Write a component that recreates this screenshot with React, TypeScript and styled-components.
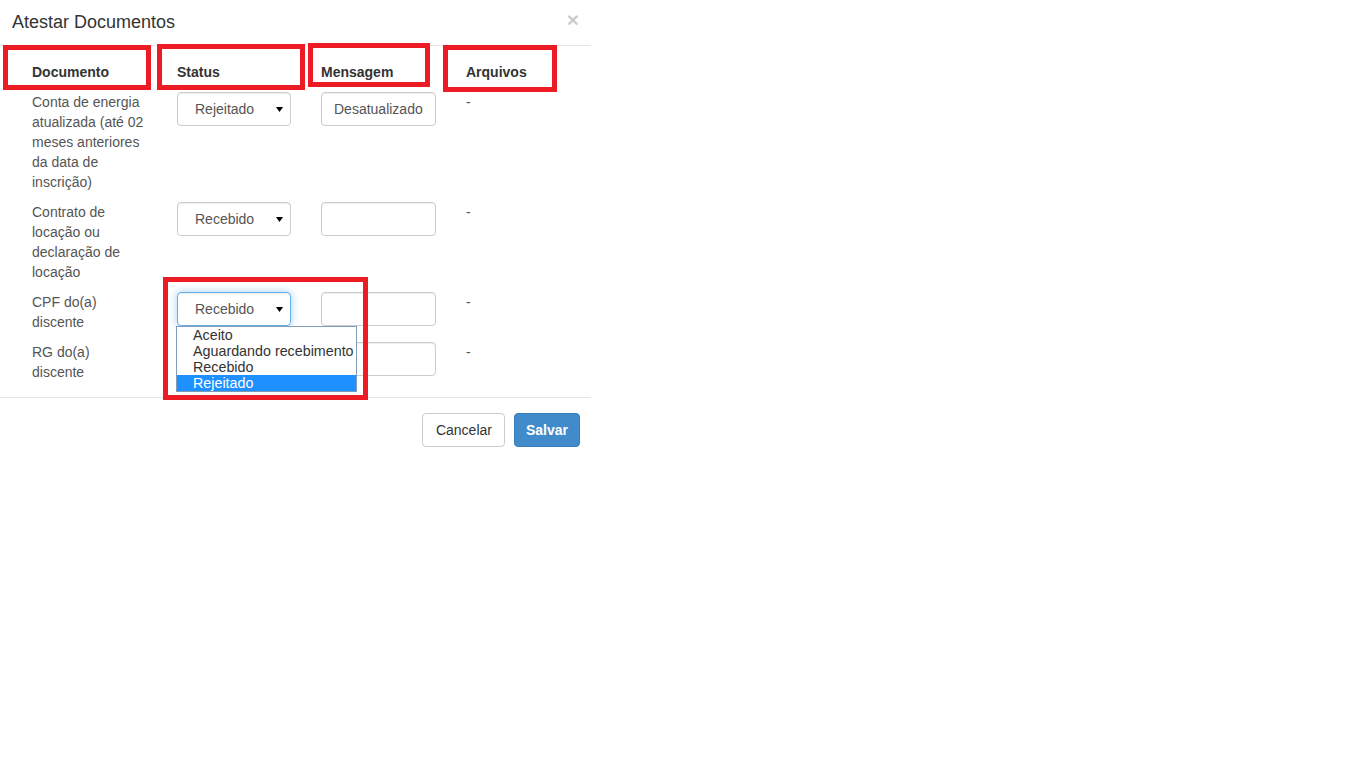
import styled, { createGlobalStyle, css } from 'styled-components'

const GlobalStyle = createGlobalStyle`
  html, body {
    margin: 0;
    padding: 0;
    background: #fff;
  }
  body {
    font-family: "Liberation Sans", Arial, Helvetica, sans-serif;
    font-size: 14px;
    line-height: 20px;
    color: #333;
  }
  * {
    box-sizing: border-box;
  }
`

interface DocRow {
  name: string
  status: string
  message: string
  open?: boolean
}

const rows: DocRow[] = [
  {
    name: 'Conta de energia atualizada (até 02 meses anteriores da data de inscrição)',
    status: 'Rejeitado',
    message: 'Desatualizado',
  },
  { name: 'Contrato de locação ou declaração de locação', status: 'Recebido', message: '' },
  { name: 'CPF do(a) discente', status: 'Recebido', message: '', open: true },
  { name: 'RG do(a) discente', status: '', message: '' },
]

const options = ['Aceito', 'Aguardando recebimento', 'Recebido', 'Rejeitado']

// red annotation frames drawn over the screenshot
const marks = [
  { left: 3, top: 45, width: 148, height: 45 },
  { left: 157, top: 44, width: 148, height: 46 },
  { left: 308, top: 43, width: 122, height: 44 },
  { left: 443, top: 45, width: 114, height: 47 },
  { left: 163, top: 277, width: 205, height: 123 },
]

const App = () => {
  return (
    <Page>
      <GlobalStyle />
      <Modal>
        <Header>
          <Title>Atestar Documentos</Title>
          <Close type="button">×</Close>
        </Header>

        <Body>
          <Table>
            <colgroup>
              <col style={{ width: 145 }} />
              <col style={{ width: 144 }} />
              <col style={{ width: 145 }} />
              <col />
            </colgroup>
            <thead>
              <tr>
                <Th>Documento</Th>
                <Th>Status</Th>
                <Th>Mensagem</Th>
                <Th>Arquivos</Th>
              </tr>
            </thead>
            <tbody>
              {rows.map((row) => (
                <tr key={row.name}>
                  <NameCell>{row.name}</NameCell>
                  <Td>
                    {row.status && (
                      <SelectWrap>
                        <SelectBox focused={row.open}>
                          {row.status}
                          <Arrow width="7" height="5" viewBox="0 0 7 5">
                            <path d="M0 0h7L3.5 5z" fill="#000" />
                          </Arrow>
                        </SelectBox>
                        {row.open && (
                          <OptionList>
                            {options.map((opt) => (
                              <Option key={opt} selected={opt === 'Rejeitado'}>
                                {opt}
                              </Option>
                            ))}
                          </OptionList>
                        )}
                      </SelectWrap>
                    )}
                  </Td>
                  <Td>
                    <TextInput readOnly value={row.message} />
                  </Td>
                  <Td>-</Td>
                </tr>
              ))}
            </tbody>
          </Table>
        </Body>

        <Footer>
          <Button>Cancelar</Button>
          <Button primary>Salvar</Button>
        </Footer>
      </Modal>

      {marks.map((m, i) => (
        <Mark key={i} style={{ left: m.left, top: m.top, width: m.width, height: m.height }} />
      ))}
    </Page>
  )
}

export default App

const Page = styled.div`
  position: relative;
  width: 1366px;
  height: 768px;
  background: #fff;
  overflow: hidden;
`

const Modal = styled.div`
  width: 591px;
  background: #fff;
`

const Header = styled.div`
  display: flex;
  align-items: flex-start;
  justify-content: space-between;
  padding: 9px 12px 10px 12px;
  border-bottom: 1px solid #e5e5e5;
`

const Title = styled.h4`
  margin: 0;
  font-size: 18px;
  line-height: 26px;
  font-weight: 400;
  color: #333;
`

const Close = styled.button`
  padding: 0;
  border: 0;
  background: transparent;
  font-family: "Liberation Sans", Arial, sans-serif;
  font-size: 21px;
  font-weight: 700;
  line-height: 21px;
  color: #000;
  opacity: 0.2;
  cursor: pointer;
`

const Body = styled.div`
  padding: 16px 15px 10px 24px;
`

const Table = styled.table`
  width: 552px;
  table-layout: fixed;
  border-collapse: collapse;
  border-spacing: 0;
`

const Th = styled.th`
  padding: 0 8px 5px;
  text-align: left;
  font-weight: 700;
  font-size: 14px;
  line-height: 20px;
  color: #333;
`

const Td = styled.td`
  padding: 5px 8px;
  vertical-align: top;
  color: #555;
  font-size: 14px;
  line-height: 20px;
`

const NameCell = styled(Td)`
  padding-right: 25px;
`

const SelectWrap = styled.div`
  position: relative;
  width: 114px;
`

const controlBase = css`
  height: 34px;
  border: 1px solid #ccc;
  border-radius: 4px;
  background: #fff;
  font-family: "Liberation Sans", Arial, sans-serif;
  font-size: 14px;
  color: #555;
  box-shadow: inset 0 1px 1px rgba(0, 0, 0, 0.075);
`

const SelectBox = styled.div<{ focused?: boolean }>`
  ${controlBase}
  position: relative;
  display: flex;
  align-items: center;
  padding: 0 16px 0 17px;
  line-height: 20px;

  ${({ focused }) =>
    focused &&
    css`
      border-color: #66afe9;
      box-shadow: inset 0 1px 1px rgba(0, 0, 0, 0.075), 0 0 8px rgba(102, 175, 233, 0.6);
    `}
`

const Arrow = styled.svg`
  position: absolute;
  right: 7px;
  top: 14px;
`

const OptionList = styled.div`
  position: absolute;
  top: 34px;
  left: -1px;
  width: 181px;
  border: 1px solid #7f9db9;
  background: #fff;
  z-index: 5;
`

const Option = styled.div<{ selected?: boolean }>`
  height: 16px;
  padding-left: 16px;
  font-size: 14.3px;
  line-height: 16px;
  white-space: nowrap;
  color: ${({ selected }) => (selected ? '#fff' : '#333')};
  background: ${({ selected }) => (selected ? '#1e90ff' : 'transparent')};
`

const TextInput = styled.input`
  ${controlBase}
  display: block;
  width: 115px;
  padding: 6px 12px;
  outline: none;
`

const Footer = styled.div`
  display: flex;
  justify-content: flex-end;
  gap: 9px;
  padding: 15px 11px 15px 15px;
  border-top: 1px solid #e5e5e5;
`

const Button = styled.button<{ primary?: boolean }>`
  height: 34px;
  padding: ${({ primary }) => (primary ? '6px 11px' : '6px 12px 6px 13px')};
  border-radius: 4px;
  font-family: "Liberation Sans", Arial, sans-serif;
  font-size: 14px;
  line-height: 20px;
  cursor: pointer;
  border: 1px solid ${({ primary }) => (primary ? '#357ebd' : '#ccc')};
  background: ${({ primary }) => (primary ? '#428bca' : '#fff')};
  color: ${({ primary }) => (primary ? '#fff' : '#333')};
  font-weight: ${({ primary }) => (primary ? 700 : 400)};
`

const Mark = styled.div`
  position: absolute;
  border: 5px solid #ed1c24;
  pointer-events: none;
  z-index: 10;
`
